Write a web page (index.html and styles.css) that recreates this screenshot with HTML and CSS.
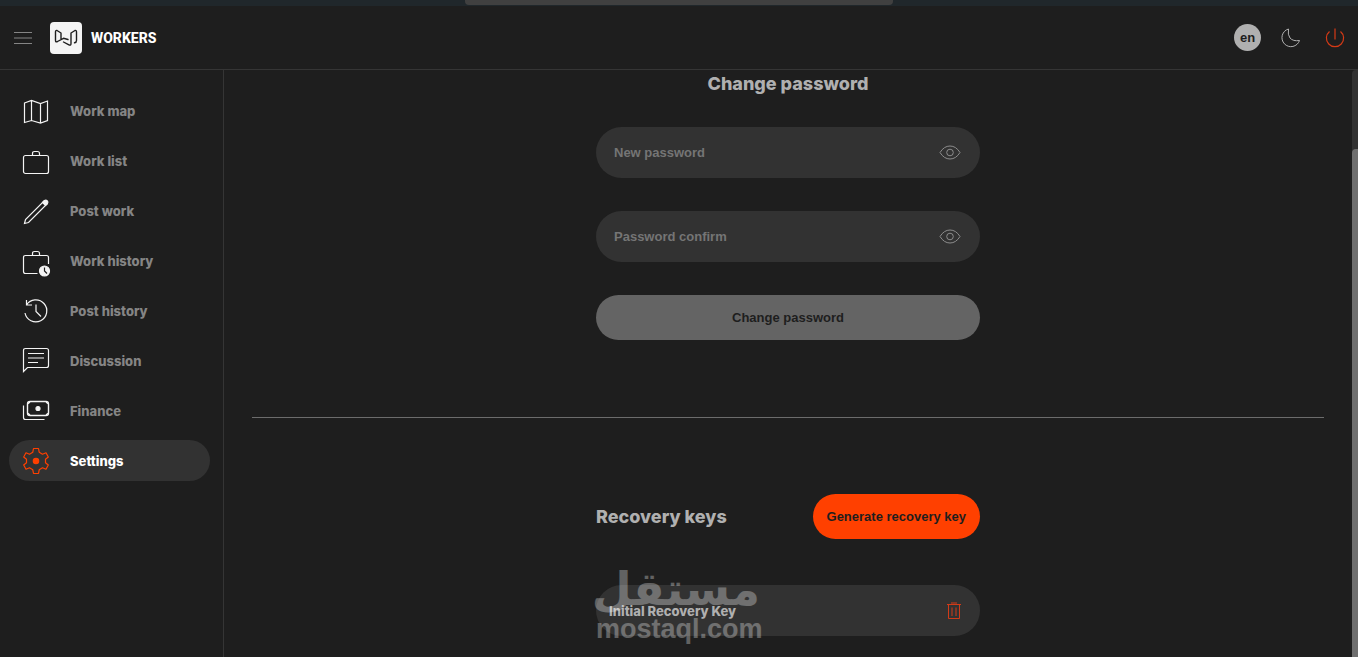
FILE: index.html
```html
<!DOCTYPE html>
<html lang="en">
<head>
<meta charset="utf-8">
<meta name="viewport" content="width=device-width, initial-scale=1">
<title>Workers - Settings</title>
<link rel="stylesheet" href="styles.css">
</head>
<body>
<div class="window-edge"><span class="window-handle"></span></div>
<header class="topbar">
  <button class="icon-button" type="button" aria-label="Toggle menu">
    <svg width="18" height="14" viewBox="0 0 18 14"><path d="M0 1.500h18M0 7h18M0 12.500h18" stroke="#858585"/></svg>
  </button>
  <a class="brand" href="#">
    <svg class="brand-mark" width="32" height="32" viewBox="0 0 32 32" aria-hidden="true">
      <rect width="32" height="32" rx="4" fill="#f4f4f4"/>
      <path d="M11 17V11L7 8.500Q5.500 8 5.500 10V18.500Q5.500 20.500 7.500 19.500L13.500 16.300L18 17.500M13.500 20L18.500 22.700Q21 24 21 21.500V11L25 8.500Q26.500 8 26.500 10V18.500Q26.500 20.500 24.500 20.800" fill="none" stroke="#1e1e1e" stroke-width="1.400" stroke-linecap="round" stroke-linejoin="round"/>
    </svg>
    <span class="brand-name">WORKERS</span>
  </a>
  <div class="actions">
    <button class="language" type="button">en</button>
    <button class="icon-button" type="button" aria-label="Dark mode">
      <svg width="20" height="20" viewBox="0 0 20 20"><path d="M7.500 1A9 9 0 1 0 18.500 12.500Q12 13.500 9 10Q6.500 7 7.500 1Z" fill="none" stroke="#b0b0b0"/></svg>
    </button>
    <button class="icon-button" type="button" aria-label="Log out">
      <svg width="20" height="20" viewBox="0 0 20 20"><path d="M4.500 3.500A8.600 8.600 0 1 0 15.500 3.500M10 .5V11.500" fill="none" stroke="#d63a16" stroke-width="1.200"/></svg>
    </button>
  </div>
</header>
<div class="layout">
  <nav class="sidebar" aria-label="Main">
    <a class="nav-item" href="#"><svg class="nav-icon" viewBox="0 0 28 28"><path d="M2.500 6L9.500 3.500L18.500 6.500L25.500 4V23.500L18.500 26L9.500 23.500L2.500 25.500ZM9.500 3.500V23.500M18.500 6.500V26"/></svg>Work map</a>
    <a class="nav-item" href="#"><svg class="nav-icon" viewBox="0 0 28 28"><rect x="1.500" y="8.500" width="25" height="18" rx="2"/><path d="M10.500 8.500V6.500Q10.500 4.500 12.500 4.500H15.500Q17.500 4.500 17.500 6.500V8.500"/></svg>Work list</a>
    <a class="nav-item" href="#"><svg class="nav-icon" viewBox="0 0 28 28"><path d="M2.500 26.500L3.500 22.500L22 4L25 7L6.500 25.500Z"/><path class="solid" d="M20.500 5.500L22.500 3.500Q24 2.500 25.200 3.800Q26.500 5 25.500 6.500L23.500 8.500Z"/></svg>Post work</a>
    <a class="nav-item" href="#"><svg class="nav-icon" viewBox="0 0 28 28"><path d="M15.500 26.500H3.500Q1.500 26.500 1.500 24.500V10.500Q1.500 8.500 3.500 8.500H24.500Q26.500 8.500 26.500 10.500V17M10.500 8.500V6.500Q10.500 4.500 12.500 4.500H15.500Q17.500 4.500 17.500 6.500V8.500"/><circle class="solid" cx="22.500" cy="24" r="5"/><path class="hand" d="M22.500 20.500V24L25 26.500"/></svg>Work history</a>
    <a class="nav-item" href="#"><svg class="nav-icon" viewBox="0 0 28 28"><path d="M4.500 3V8H10M4.500 8A11 11 0 1 1 3 16M14 7.500V14.500L19 19.500"/></svg>Post history</a>
    <a class="nav-item" href="#"><svg class="nav-icon" viewBox="0 0 28 28"><path d="M1.500 24.500V3.500Q1.500 1.500 3.500 1.500H24.500Q26.500 1.500 26.500 3.500V18.500Q26.500 20.500 24.500 20.500H5.500ZM6 6.500H22M6 11H22M6 15.500H16"/></svg>Discussion</a>
    <a class="nav-item" href="#"><svg class="nav-icon" viewBox="0 0 28 28"><rect x="5.500" y="4.500" width="21" height="14" rx="2.500" stroke-width="1.400"/><path d="M1.500 8.500V20.500Q1.500 22.500 3.500 22.500H22.500M6 6.800L8 5M24 5L26 6.800M6 16.200L8 18M24 18L26 16.200"/><circle class="solid" cx="16" cy="11.500" r="2"/></svg>Finance</a>
    <a class="nav-item nav-item-active" href="#" aria-current="page"><svg class="nav-icon" viewBox="0 0 28 28"><path d="M11.500 1.500H16.500L17.200 5.200L20.500 7.200L24 5.800L26.300 10L23.500 12.300V15.700L26.300 18L24 22.200L20.500 20.800L17.200 22.800L16.500 26.500H11.500L10.800 22.800L7.500 20.800L4 22.200L1.700 18L4.500 15.700V12.300L1.700 10L4 5.800L7.500 7.200L10.800 5.200Z" stroke-linejoin="round"/><circle class="solid" cx="14" cy="14" r="2.700"/></svg>Settings</a>
  </nav>
  <main class="content">
    <form class="column password-form">
      <h2 class="title">Change password</h2>
      <div class="field">
        <input class="field-input" type="password" placeholder="New password" aria-label="New password">
        <button class="icon-button" type="button" aria-label="Show new password"><svg width="22" height="16" viewBox="0 0 22 16"><path d="M1 7.500Q5 1 11 1T21 7.500Q17 14 11 14T1 7.500Z" fill="none" stroke="#8c8c8c"/><circle cx="11" cy="7.500" r="3.300" fill="none" stroke="#8c8c8c"/></svg></button>
      </div>
      <div class="field">
        <input class="field-input" type="password" placeholder="Password confirm" aria-label="Password confirm">
        <button class="icon-button" type="button" aria-label="Show password confirmation"><svg width="22" height="16" viewBox="0 0 22 16"><path d="M1 7.500Q5 1 11 1T21 7.500Q17 14 11 14T1 7.500Z" fill="none" stroke="#8c8c8c"/><circle cx="11" cy="7.500" r="3.300" fill="none" stroke="#8c8c8c"/></svg></button>
      </div>
      <button class="button button-muted" type="submit">Change password</button>
    </form>
    <hr class="divider">
    <section class="column recovery">
      <div class="recovery-head">
        <h2 class="title">Recovery keys</h2>
        <button class="button button-primary" type="button">Generate recovery key</button>
      </div>
      <div class="key-row">
        <span class="key-name">Initial Recovery Key</span>
        <button class="icon-button" type="button" aria-label="Delete key"><svg width="16" height="18" viewBox="0 0 16 18"><path d="M1 2.500H15M5 1H11M2.500 2.500V16.500H13.500V2.500M6 5.500V14M10 5.500V14" fill="none" stroke="#d13b18"/></svg></button>
        <div class="watermark">
          <span class="watermark-arabic" lang="ar" dir="rtl">مستقل</span>
          <span class="watermark-latin">mostaql.com</span>
        </div>
      </div>
    </section>
  </main>
  <div class="scroll-track"><div class="scroll-thumb"></div></div>
</div>
</body>
</html>
```
FILE: styles.css
```css
* { box-sizing: border-box; }

body {
  display: flex;
  flex-direction: column;
  min-height: 100vh;
  margin: 0;
  background: #1e1e1e;
  color: #b0b0b0;
  font-family: Inter, "Liberation Sans", sans-serif;
  font-size: 13px;
}

button {
  border: 0;
  cursor: pointer;
  font: bold 13px "Liberation Sans", sans-serif;
}

svg { display: block; }

.window-edge {
  display: flex;
  justify-content: center;
  height: 6px;
  background: #20272b;
}

.window-handle {
  width: 428px;
  height: 5px;
  border-radius: 0 0 4px 4px;
  background: #404040;
}

.topbar {
  display: flex;
  align-items: center;
  height: 64px;
  padding: 0 14px;
  border-bottom: 1px solid #353535;
}

.icon-button {
  padding: 0;
  background: transparent;
}

.brand {
  display: flex;
  align-items: center;
  gap: 9px;
  margin-left: 18px;
  color: #fff;
  text-decoration: none;
}

.brand-name { font: 800 14px/20px Roboto, sans-serif; }

.actions {
  display: flex;
  align-items: center;
  gap: 20px;
  margin-left: auto;
}

.actions .icon-button + .icon-button { margin-left: 4px; margin-right: -1px; }

.language {
  width: 27px;
  height: 27px;
  padding: 0;
  border-radius: 50%;
  background: #b0b0b0;
  color: #1e1e1e;
}

.layout {
  display: flex;
  flex: 1;
}

.sidebar {
  display: flex;
  flex-direction: column;
  gap: 9px;
  width: 224px;
  padding: 20px 13px 0 9px;
  border-right: 1px solid #353535;
}

.nav-item {
  display: flex;
  align-items: center;
  gap: 20px;
  height: 41px;
  padding-left: 13px;
  border-radius: 21px;
  color: #858585;
  font-weight: 800;
  text-decoration: none;
}

.nav-item-active {
  background: #323232;
  color: #fff;
}

.nav-icon {
  width: 28px;
  height: 28px;
  overflow: visible;
  fill: none;
  stroke: #f4f4f4;
  stroke-width: 1.2;
}

.nav-icon .solid {
  fill: #f4f4f4;
  stroke: #f4f4f4;
}

.nav-icon .hand { stroke: #1e1e1e; }

.nav-item-active .nav-icon { stroke: #ff4000; }

.nav-item-active .solid {
  fill: #ff4000;
  stroke: #ff4000;
}

.content {
  flex: 1;
  padding: 4px 28px 20px;
}

.column {
  display: flex;
  flex-direction: column;
  max-width: 384px;
  margin: 0 auto;
}

.title {
  margin: 0;
  color: #b0b0b0;
  font-size: 18px;
  font-weight: 800;
  line-height: 20px;
}

.password-form { gap: 33px; }
.password-form .title { text-align: center; }

.field,
.key-row {
  display: flex;
  align-items: center;
  height: 51px;
  border-radius: 26px;
  background: #323232;
}

.field { padding: 0 19px 0 18px; }

.field-input {
  flex: 1;
  min-width: 0;
  padding: 0;
  border: 0;
  outline: 0;
  background: transparent;
  color: #b0b0b0;
  font: bold 13px "Liberation Sans", sans-serif;
}

.field-input::placeholder { color: #757575; }

.button {
  height: 45px;
  padding: 0 14px;
  border-radius: 23px;
  color: #1e1e1e;
}

.button-muted { background: #646464; }
.button-primary { background: #ff4000; }

.divider {
  height: 1px;
  margin: 77px 0 76px;
  border: 0;
  background: #6c6c6c;
}

.recovery { gap: 46px; }

.recovery-head {
  display: flex;
  align-items: center;
  justify-content: space-between;
}

.key-row {
  position: relative;
  justify-content: space-between;
  padding: 0 18px 0 13px;
}

.key-name { font-weight: 800; }

.watermark {
  position: absolute;
  top: -24px;
  left: 0;
  display: flex;
  flex-direction: column;
  width: 164px;
  color: #fff;
  opacity: 0.3;
  pointer-events: none;
}

.watermark-arabic {
  font: bold 46px/56px "DejaVu Sans", sans-serif;
  white-space: nowrap;
}

.watermark-latin {
  font: bold 27px/24px "Liberation Sans", sans-serif;
}

.scroll-track {
  width: 6px;
  padding-top: 79px;
  border-radius: 4px 0 0 0;
  background: #323232;
}

.scroll-thumb {
  height: 100%;
  border-radius: 4px 0 0 0;
  background: #6f6f6f;
}
```
